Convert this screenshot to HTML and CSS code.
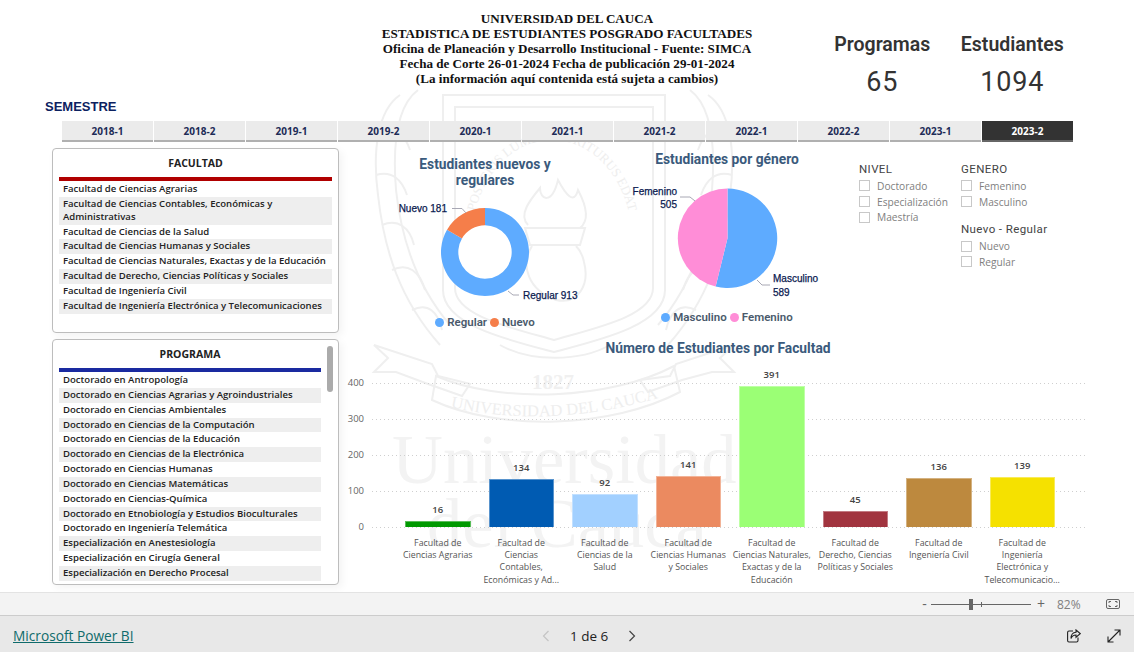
FILE: index.html
```html
<!DOCTYPE html>
<html lang="es">
<head>
    <meta charset="UTF-8">
    <title>Estadistica de Estudiantes Posgrado</title>
    <link rel="stylesheet" href="styles.css">
</head>
<body>
    <div class="report">
        <!-- escudo de fondo -->
        <svg class="watermark" width="1134" height="592" viewBox="0 0 1134 592">
            <g fill="none" stroke="#efefef" stroke-width="2">
                <path d="M443 95H665V290C665 325 600 340 554 352C508 340 443 325 443 290Z"/>
                <path d="M455 107H653V288C653 316 596 328 554 340C512 328 455 316 455 288Z"/>
                <path d="M400 95C378 110 372 150 378 195C384 250 400 300 440 345"/>
                <path d="M418 90C398 105 392 140 396 190C402 245 420 290 450 325"/>
                <path d="M708 95C730 110 736 150 730 195C724 250 708 300 668 345"/>
                <path d="M690 90C710 105 716 140 712 190C706 245 688 290 658 325"/>
                <path d="M380 130C395 125 405 135 410 150M376 175C392 170 402 180 407 195M382 225C398 218 410 228 414 245M392 270C408 262 420 272 425 290M412 310C428 302 438 312 442 330"/>
                <path d="M728 130C713 125 703 135 698 150M732 175C716 170 706 180 701 195M726 225C710 218 698 228 694 245M716 270C700 262 688 272 683 290M696 310C680 302 670 312 666 330"/>
                <path d="M528 225C518 215 530 200 540 188C540 200 552 205 558 180C566 195 574 205 578 190C586 205 590 220 580 228"/>
                <path d="M525 228H585L580 245H530Z"/>
                <path d="M532 246C520 265 528 290 556 300C578 305 590 285 584 262C582 252 578 248 576 246"/>
                <path d="M374 345L432 364L438 376L470 384L462 396L428 384L396 372L374 372L388 358Z"/>
                <path d="M734 345L676 364L670 376L640 380L648 392L682 380L712 372L734 372L720 358Z"/>
                <path d="M436 376C500 404 610 400 674 366L680 392C612 428 500 432 432 400Z"/>
                <path d="M500 345C530 362 580 362 610 345"/>
            </g>
            <path id="wmMotto" fill="none" d="M472 240A80 100 0 0 1 632 240"/>
            <path id="wmBanner" fill="none" d="M441 405Q550 432 668 395"/>
            <text class="wm-motto"><textPath href="#wmMotto" startOffset="50%" text-anchor="middle">POSTERIS LUMEN MORITURUS EDAT</textPath></text>
            <text class="wm-banner"><textPath href="#wmBanner" startOffset="50%" text-anchor="middle">UNIVERSIDAD DEL CAUCA</textPath></text>
            <text class="wm-year" x="553" y="389" text-anchor="middle">1827</text>
            <text class="wm-name" x="392" y="483">Universidad</text>
            <text class="wm-name" x="427" y="547">del Cauca</text>
        </svg>

        <header class="top">
            <div></div>
            <div class="title">
                <div>UNIVERSIDAD DEL CAUCA</div>
                <div>ESTADISTICA DE ESTUDIANTES POSGRADO FACULTADES</div>
                <div>Oficina de Planeación y Desarrollo Institucional - Fuente: SIMCA</div>
                <div>Fecha de Corte 26-01-2024 Fecha de publicación 29-01-2024</div>
                <div>(La información aquí contenida está sujeta a cambios)</div>
            </div>
            <div class="kpis">
                <div class="kpi">
                    <div class="kpi-label">Programas</div>
                    <div class="kpi-value">65</div>
                </div>
                <div class="kpi">
                    <div class="kpi-label">Estudiantes</div>
                    <div class="kpi-value">1094</div>
                </div>
            </div>
        </header>

        <div class="semester-label">SEMESTRE</div>
        <div class="tabs">
            <div class="tab">2018-1</div>
            <div class="tab">2018-2</div>
            <div class="tab">2019-1</div>
            <div class="tab">2019-2</div>
            <div class="tab">2020-1</div>
            <div class="tab">2021-1</div>
            <div class="tab">2021-2</div>
            <div class="tab">2022-1</div>
            <div class="tab">2022-2</div>
            <div class="tab">2023-1</div>
            <div class="tab active">2023-2</div>
        </div>

        <div class="content">
            <div class="left-col">
                <div class="slicer slicer-faculty">
                    <div class="slicer-title">FACULTAD</div>
                    <div class="slicer-bar bar-red"></div>
                    <div class="row">Facultad de Ciencias Agrarias</div>
                    <div class="row">Facultad de Ciencias Contables, Económicas y Administrativas</div>
                    <div class="row">Facultad de Ciencias de la Salud</div>
                    <div class="row">Facultad de Ciencias Humanas y Sociales</div>
                    <div class="row">Facultad de Ciencias Naturales, Exactas y de la Educación</div>
                    <div class="row">Facultad de Derecho, Ciencias Políticas y Sociales</div>
                    <div class="row">Facultad de Ingeniería Civil</div>
                    <div class="row">Facultad de Ingeniería Electrónica y Telecomunicaciones</div>
                </div>
                <div class="slicer slicer-program">
                    <div class="scroll-thumb"></div>
                    <div class="slicer-title">PROGRAMA</div>
                    <div class="slicer-bar bar-blue"></div>
                    <div class="row">Doctorado en Antropología</div>
                    <div class="row">Doctorado en Ciencias Agrarias y Agroindustriales</div>
                    <div class="row">Doctorado en Ciencias Ambientales</div>
                    <div class="row">Doctorado en Ciencias de la Computación</div>
                    <div class="row">Doctorado en Ciencias de la Educación</div>
                    <div class="row">Doctorado en Ciencias de la Electrónica</div>
                    <div class="row">Doctorado en Ciencias Humanas</div>
                    <div class="row">Doctorado en Ciencias Matemáticas</div>
                    <div class="row">Doctorado en Ciencias-Química</div>
                    <div class="row">Doctorado en Etnobiología y Estudios Bioculturales</div>
                    <div class="row">Doctorado en Ingeniería Telemática</div>
                    <div class="row">Especialización en Anestesiología</div>
                    <div class="row">Especialización en Cirugía General</div>
                    <div class="row">Especialización en Derecho Procesal</div>
                </div>
            </div>

            <div class="right-col">
                <div class="charts-top">
                    <div class="chart chart-donut">
                        <div class="chart-title">Estudiantes nuevos y<br>regulares</div>
                        <svg class="chart-svg" width="200" height="124" viewBox="0 0 200 124">
                            <path fill="#5eabff" d="M100 18A44 44 0 1 1 62.05 39.73L76.97 48.49A26.7 26.7 0 1 0 100 35.3Z"/>
                            <path fill="#f57e4a" d="M100 18A44 44 0 0 0 62.05 39.73L76.97 48.49A26.7 26.7 0 0 1 100 35.3Z"/>
                            <path class="leader" d="M67 18.5H77L81 23"/>
                            <path class="leader" d="M123 101L128 105H134"/>
                            <text class="data-label" x="62" y="22" text-anchor="end">Nuevo 181</text>
                            <text class="data-label" x="138" y="109">Regular 913</text>
                        </svg>
                        <div class="legend">
                            <span class="dot dot-blue"></span>Regular
                            <span class="dot dot-orange"></span>Nuevo
                        </div>
                    </div>
                    <div class="chart chart-pie">
                        <div class="chart-title">Estudiantes por género</div>
                        <svg class="chart-svg" width="240" height="136" viewBox="0 0 240 136">
                            <path fill="#5eabff" d="M120.5 68.3V18.6A49.7 49.7 0 1 1 108.65 116.56Z"/>
                            <path fill="#ff8dd7" d="M120.5 68.3V18.6A49.7 49.7 0 0 0 108.65 116.56Z"/>
                            <path class="leader" d="M73 27H83L88 31"/>
                            <path class="leader" d="M150 110L155 115H163"/>
                            <text class="data-label" x="70" y="25" text-anchor="end">Femenino</text>
                            <text class="data-label" x="70" y="38" text-anchor="end">505</text>
                            <text class="data-label" x="166" y="112">Masculino</text>
                            <text class="data-label" x="166" y="126">589</text>
                        </svg>
                        <div class="legend">
                            <span class="dot dot-blue"></span>Masculino
                            <span class="dot dot-pink"></span>Femenino
                        </div>
                    </div>
                    <div class="filters">
                        <div class="filter-col">
                            <div class="filter-title">NIVEL</div>
                            <div class="check"><span class="box"></span>Doctorado</div>
                            <div class="check"><span class="box"></span>Especialización</div>
                            <div class="check"><span class="box"></span>Maestría</div>
                        </div>
                        <div class="filter-col">
                            <div class="filter-title">GENERO</div>
                            <div class="check"><span class="box"></span>Femenino</div>
                            <div class="check"><span class="box"></span>Masculino</div>
                            <div class="filter-title filter-title-2">Nuevo - Regular</div>
                            <div class="check"><span class="box"></span>Nuevo</div>
                            <div class="check"><span class="box"></span>Regular</div>
                        </div>
                    </div>
                </div>

                <div class="chart-title chart-title-bars">Número de Estudiantes por Facultad</div>
                <div class="plot">
                    <div class="gridline" style="top: 27px"><span>400</span></div>
                    <div class="gridline" style="top: 63px"><span>300</span></div>
                    <div class="gridline" style="top: 99px"><span>200</span></div>
                    <div class="gridline" style="top: 135px"><span>100</span></div>
                    <div class="gridline" style="top: 171px"><span>0</span></div>
                    <div class="col"><div class="val">16</div><div class="bar" style="height: 6px; background: #009900"></div></div>
                    <div class="col"><div class="val">134</div><div class="bar" style="height: 48px; background: #005bb2"></div></div>
                    <div class="col"><div class="val">92</div><div class="bar" style="height: 33px; background: #a2d0ff"></div></div>
                    <div class="col"><div class="val">141</div><div class="bar" style="height: 51px; background: #eb8a60"></div></div>
                    <div class="col"><div class="val">391</div><div class="bar" style="height: 141px; background: #9bff75"></div></div>
                    <div class="col"><div class="val">45</div><div class="bar" style="height: 16px; background: #a1343f"></div></div>
                    <div class="col"><div class="val">136</div><div class="bar" style="height: 49px; background: #bd893e"></div></div>
                    <div class="col"><div class="val">139</div><div class="bar" style="height: 50px; background: #f5e100"></div></div>
                </div>
                <div class="x-labels">
                    <div class="x-label">Facultad de<br>Ciencias Agrarias</div>
                    <div class="x-label">Facultad de<br>Ciencias<br>Contables,<br>Económicas y Ad...</div>
                    <div class="x-label">Facultad de<br>Ciencias de la<br>Salud</div>
                    <div class="x-label">Facultad de<br>Ciencias Humanas<br>y Sociales</div>
                    <div class="x-label">Facultad de<br>Ciencias Naturales,<br>Exactas y de la<br>Educación</div>
                    <div class="x-label">Facultad de<br>Derecho, Ciencias<br>Políticas y Sociales</div>
                    <div class="x-label">Facultad de<br>Ingeniería Civil</div>
                    <div class="x-label">Facultad de<br>Ingeniería<br>Electrónica y<br>Telecomunicacio...</div>
                </div>
            </div>
        </div>
    </div>

    <div class="zoombar">
        <span class="zoom-btn">-</span>
        <div class="slider"><span class="slider-tick"></span><span class="slider-thumb"></span></div>
        <span class="zoom-btn">+</span>
        <span class="zoom-pct">82%</span>
        <svg class="fit-icon" width="14" height="10" viewBox="0 0 14 10" fill="none" stroke="#666">
            <rect x="0.5" y="0.5" width="13" height="9" rx="1.5"/>
            <path d="M3 4V2.5H5M9 2.5H11V4M11 6V7.5H9M5 7.5H3V6"/>
        </svg>
    </div>
    <footer class="bottombar">
        <a class="pbi-link" href="#">Microsoft Power BI</a>
        <div class="pager">
            <svg width="8" height="12" viewBox="0 0 8 12" fill="none" stroke="#c4c4c4" stroke-width="1.2"><path d="M6.5 1L1.5 6L6.5 11"/></svg>
            <span>1 de 6</span>
            <svg width="8" height="12" viewBox="0 0 8 12" fill="none" stroke="#444" stroke-width="1.2"><path d="M1.5 1L6.5 6L1.5 11"/></svg>
        </div>
        <div class="actions">
            <svg width="14" height="14" viewBox="0 0 14 14" fill="none" stroke="#222" stroke-width="1.1">
                <path d="M6 2H2A1.5 1.5 0 0 0 .6 3.5V11.5A1.5 1.5 0 0 0 2 13H9.5A1.5 1.5 0 0 0 11 11.5V8.5"/>
                <path d="M9 1L13.2 4.6L9 8.2V6C6.5 6 5 7 4 9.5C4 6 5.8 3.4 9 3.2Z"/>
            </svg>
            <svg width="14" height="14" viewBox="0 0 14 14" fill="none" stroke="#222" stroke-width="1.1">
                <path d="M1 13L13 1M7.5 1H13V6.5M1 7.5V13H6.5"/>
            </svg>
        </div>
    </footer>
</body>
</html>
```

FILE: styles.css
```css
* {
    box-sizing: border-box;
    margin: 0;
    padding: 0;
}

body {
    width: 1134px;
    height: 652px;
    overflow: hidden;
    background: white;
    font-family: "Open Sans", sans-serif;
}

.report {
    position: relative;
    height: 592px;
    overflow: hidden;
    isolation: isolate;
    background: white;
}

/* marca de agua */
.watermark {
    position: absolute;
    top: 0;
    left: 0;
    z-index: -1;
}

.wm-motto {
    font: 13px "Liberation Serif", serif;
    fill: #eeeeee;
}

.wm-banner {
    font: 16.5px "Liberation Serif", serif;
    fill: #eeeeee;
}

.wm-year {
    font: bold 21px "Liberation Serif", serif;
    fill: #f0f0f0;
}

.wm-name {
    font: 70.5px "Liberation Serif", serif;
    fill: #f3f3f3;
}

.top {
    display: grid;
    grid-template-columns: 1fr auto 1fr;
    height: 98px;
    padding-top: 10.6px;
}

.title {
    font-family: "Liberation Serif", serif;
    font-weight: bold;
    font-size: 13.1px;
    line-height: 15px;
    text-align: center;
    color: #111;
}

.kpis {
    display: flex;
    margin-left: 65px;
    padding-top: 22px;
}

.kpi {
    width: 130px;
    text-align: center;
    color: #333;
}

.kpi-label {
    font-family: Roboto, sans-serif;
    font-weight: 600;
    font-size: 19.5px;
    line-height: 24px;
}

.kpi-value {
    font-family: Roboto, sans-serif;
    font-size: 27px;
    line-height: 34px;
    margin-top: 8px;
    letter-spacing: 0.8px;
}

.semester-label {
    margin-left: 45px;
    height: 23px;
    font-family: "Liberation Sans", sans-serif;
    font-weight: bold;
    font-size: 13px;
    line-height: 18px;
    color: #0c2160;
}

.tabs {
    display: flex;
    gap: 1px;
    margin-left: 62px;
    width: 1011px;
    height: 21px;
}

.tab {
    flex: 1;
    background: #ebebeb;
    border-bottom: 2px solid #b0b0b0;
    font-weight: bold;
    font-size: 10px;
    line-height: 20px;
    text-align: center;
    color: #1d2b57;
}

.tab.active {
    background: #333;
    border-bottom-color: #666;
    color: white;
}

.content {
    display: flex;
    margin-top: 6px;
    padding-left: 52px;
}

.left-col {
    display: flex;
    flex-direction: column;
    gap: 6px;
    width: 287px;
}

.slicer {
    position: relative;
    background: white;
    border: 1px solid #bdbdbd;
    border-radius: 4px;
    padding: 6px 6px 0;
    box-shadow: 3px 3px 8px rgba(0, 0, 0, 0.05);
    overflow: hidden;
}

.slicer-faculty {
    height: 185px;
}

.slicer-program {
    height: 246px;
    padding-right: 17px;
}

.slicer-title {
    font-weight: bold;
    font-size: 10.5px;
    line-height: 16px;
    text-align: center;
    color: #222;
}

.slicer-bar {
    height: 4px;
    margin: 6px 0 1px;
}

.bar-red {
    background: #b00000;
}

.bar-blue {
    background: #1a2aa0;
}

.row {
    font-weight: 600;
    font-size: 9.55px;
    line-height: 12.85px;
    padding: 1px 4px;
    color: #222;
}

.slicer-faculty .row:nth-child(even) {
    background: #eeeeee;
}

.slicer-program .row:nth-child(odd) {
    background: #eeeeee;
}

.scroll-thumb {
    position: absolute;
    top: 6px;
    right: 5px;
    width: 6px;
    height: 46px;
    border-radius: 3px;
    background: #ababab;
}

.right-col {
    width: 795px;
}

.charts-top {
    display: flex;
    height: 190px;
}

.chart-donut {
    width: 200px;
    margin-left: 46px;
    padding-top: 8px;
}

.chart-pie {
    width: 240px;
    margin-left: 22px;
    padding-top: 3px;
}

.chart-title {
    font-family: Roboto, sans-serif;
    font-weight: 700;
    font-size: 13.8px;
    line-height: 16px;
    text-align: center;
    color: #3a5a7c;
}

.chart-svg {
    display: block;
}

.chart-donut .chart-svg {
    margin-top: 2px;
}

.chart-pie .chart-svg {
    margin-top: 3px;
}

.leader {
    fill: none;
    stroke: #a8a8b4;
    stroke-width: 1;
}

.data-label {
    font-family: "Liberation Sans", sans-serif;
    font-size: 10px;
    fill: #0a1a50;
    stroke: #0a1a50;
    stroke-width: 0.25;
}

.legend {
    display: flex;
    justify-content: center;
    align-items: center;
    gap: 3px;
    height: 16px;
    font-family: Roboto, sans-serif;
    font-weight: 600;
    font-size: 11.5px;
    color: #4a5a6c;
}

.chart-pie .legend {
    margin-top: 3px;
}

.dot {
    width: 9px;
    height: 9px;
    border-radius: 50%;
}

.dot-blue {
    background: #5eabff;
}

.dot-orange {
    background: #f57e4a;
}

.dot-pink {
    background: #ff8dd7;
}

.filters {
    display: flex;
    margin-left: 12px;
    padding-top: 13px;
    font-size: 10.2px;
    color: #808080;
}

.filter-col {
    width: 102px;
}

.filter-title {
    font-family: Roboto, sans-serif;
    font-size: 11.5px;
    line-height: 16px;
    letter-spacing: 0.4px;
    color: #444;
    margin-bottom: 1px;
}

.filter-title-2 {
    margin-top: 12px;
}

.check {
    display: flex;
    align-items: center;
    gap: 7px;
    height: 15.7px;
}

.box {
    width: 11px;
    height: 11px;
    border: 1px solid #c8c8c8;
    background: white;
}

.chart-title-bars {
    margin-left: 40px;
    margin-top: 2px;
    width: 678px;
}

.plot {
    position: relative;
    display: flex;
    align-items: flex-end;
    margin-left: 33px;
    padding-left: 24px;
    width: 716px;
    height: 171px;
}

.gridline {
    position: absolute;
    left: 0;
    right: 0;
    height: 1px;
    background-image: repeating-linear-gradient(90deg, #cfcfcf 0 1px, transparent 1px 4px);
}

.gridline span {
    position: absolute;
    right: 100%;
    top: -7px;
    margin-right: 8px;
    font-size: 9.5px;
    line-height: 14px;
    color: #666;
}

.col {
    position: relative;
    display: flex;
    flex-direction: column;
    align-items: center;
    width: 83.5px;
}

.val {
    font-weight: 600;
    font-size: 9.5px;
    line-height: 12px;
    margin-bottom: 5px;
    color: #444;
}

.bar {
    width: 65.5px;
    border: 1px solid rgba(255, 255, 255, 0.35);
    border-bottom: none;
}

.x-labels {
    display: flex;
    margin-left: 57px;
    margin-top: 10px;
}

.x-label {
    flex: none;
    width: 83.5px;
    font-size: 8.8px;
    line-height: 12.2px;
    text-align: center;
    color: #555;
    white-space: nowrap;
}

/* barras inferiores */
.zoombar {
    display: flex;
    align-items: center;
    height: 24px;
    padding-left: 921px;
    background: #f3f3f3;
    border-top: 1px solid #e3e3e3;
    border-bottom: 1px solid #cccccc;
    color: #666;
}

.zoom-btn {
    width: 7px;
    font-size: 14px;
    line-height: 14px;
    text-align: center;
}

.slider {
    position: relative;
    width: 100px;
    height: 1px;
    margin: 0 6px 0 3px;
    background: #666;
}

.slider-thumb {
    position: absolute;
    left: 38px;
    top: -5px;
    width: 4px;
    height: 11px;
    background: #666;
}

.slider-tick {
    position: absolute;
    left: 50px;
    top: -2px;
    width: 1px;
    height: 5px;
    background: #666;
}

.zoom-pct {
    margin-left: 13px;
    font-size: 12px;
    color: #808080;
}

.fit-icon {
    margin-left: 25px;
}

.bottombar {
    display: grid;
    grid-template-columns: 540px auto 1fr;
    align-items: center;
    height: 36px;
    padding: 3px 0 0 13px;
    background: #e8e8e8;
}

.pbi-link {
    font-size: 13.7px;
    color: #0f6b6b;
}

.pager {
    display: flex;
    align-items: center;
    gap: 20px;
    font-size: 13.5px;
    font-weight: 500;
    color: #222;
    margin-left: -11px;
}

.actions {
    display: flex;
    gap: 26px;
    justify-content: flex-end;
    padding-right: 13px;
}
```
